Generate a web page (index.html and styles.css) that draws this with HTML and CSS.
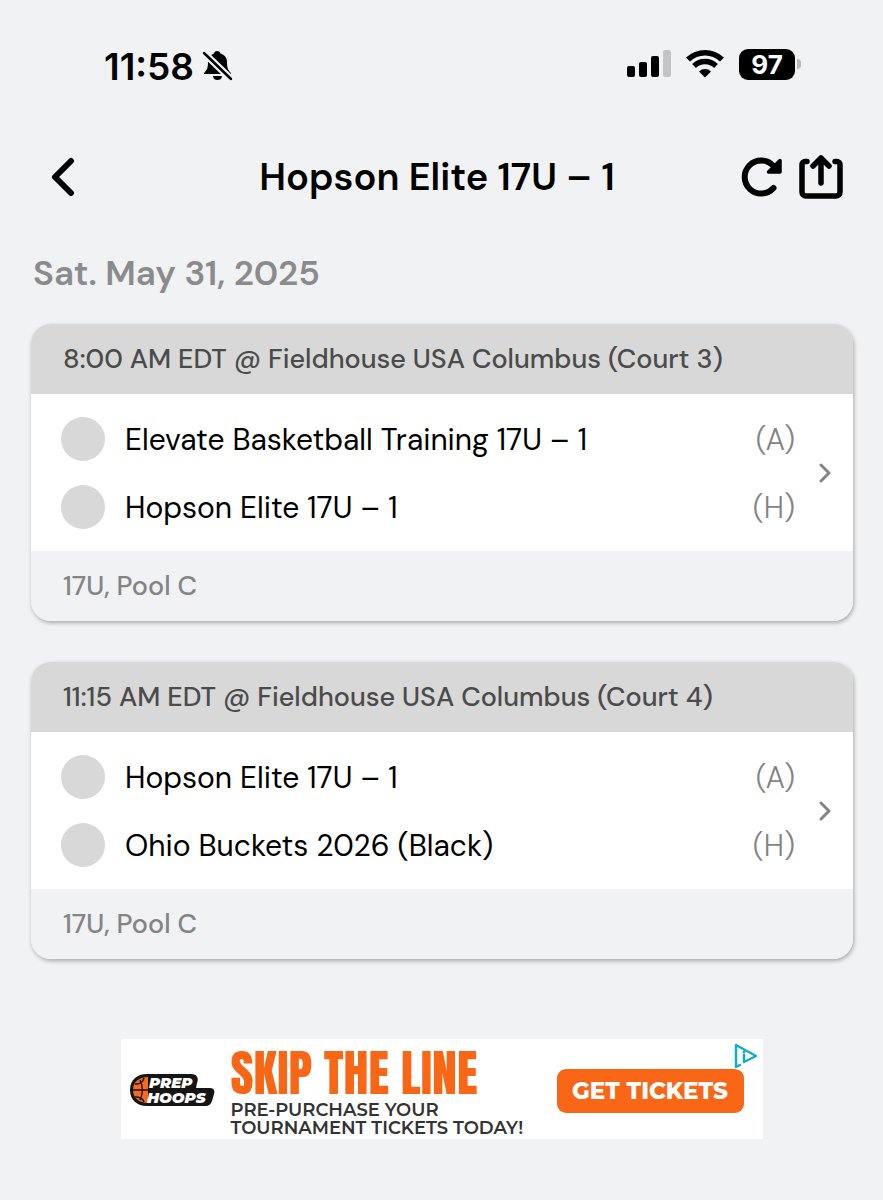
FILE: index.html
```
<!DOCTYPE html>
<html lang="en">
  <head>
    <meta charset="UTF-8" />
    <meta name="viewport" content="width=device-width, initial-scale=1.0" />
    <title>Hopson Elite 17U – 1</title>
    <link rel="stylesheet" href="styles.css">
  </head>
  <body>
    <div class="status">
      <div class="status__group">
        <span class="status__time">11:58</span>
        <svg width="32" height="34" viewBox="0 0 32 34" aria-hidden="true">
          <path d="M16 2c2 0 3 1 3.500 2.500C24 6 26 9 26 13c0 6 1 8 4 11v1H3v-1c3-3 4-5 4-11 0-4 2-7 6-8.500C13.500 3 14 2 16 2zM12 27h9c-.5 3-2 4-4.500 4S12.500 30 12 27z" />
          <path d="M3 4l27 26" stroke="#f1f2f4" stroke-width="7" />
          <path d="M3 4l27 26" stroke="#000" stroke-width="2.500" stroke-linecap="round" />
        </svg>
      </div>
      <div class="status__group status__group--right">
        <svg width="44" height="30" viewBox="0 0 44 30" aria-hidden="true">
          <rect x="0" y="17" width="8" height="11" rx="2" />
          <rect x="12" y="13" width="8" height="15" rx="2" />
          <rect x="24" y="7" width="8" height="21" rx="2" />
          <rect x="36" y="1" width="8" height="27" rx="2" fill="#c3c4c6" />
        </svg>
        <svg width="38" height="30" viewBox="0 0 38 30" aria-hidden="true">
          <path d="M2 10.500a24.500 24.500 0 0 1 34 0M8 17a16 16 0 0 1 22 0" fill="none" stroke="#000" stroke-width="5.500" />
          <path d="M19 28.500l-6-6a8.500 8.500 0 0 1 12 0z" />
        </svg>
        <span class="battery">97</span>
      </div>
    </div>

    <header class="topbar">
      <button class="icon-btn" type="button" aria-label="Back">
        <svg width="24" height="40" viewBox="0 0 24 40">
          <path d="M20 4L4 20l16 16" fill="none" stroke="#000" stroke-width="6" stroke-linecap="round" stroke-linejoin="round" />
        </svg>
      </button>
      <h1 class="topbar__title">Hopson Elite 17U – 1</h1>
      <div class="topbar__actions">
        <button class="icon-btn" type="button" aria-label="Refresh">
          <svg width="42" height="46" viewBox="0 0 42 46">
            <path d="M32 11.500A16.500 16.500 0 1 0 32.500 34" fill="none" stroke="#000" stroke-width="6" stroke-linecap="round" />
            <path d="M39 6.500v11.500H27.500z" stroke="#000" stroke-width="3.500" stroke-linejoin="round" />
          </svg>
        </button>
        <button class="icon-btn" type="button" aria-label="Share">
          <svg width="44" height="46" viewBox="0 0 44 46">
            <path d="M8 7.500H6a3 3 0 0 0-3 3V38a4 4 0 0 0 4 4h30a4 4 0 0 0 4-4V10.500a3 3 0 0 0-3-3h-2M22 29V5M14 12l8-8 8 8" fill="none" stroke="#000" stroke-width="5.500" stroke-linecap="round" stroke-linejoin="round" />
          </svg>
        </button>
      </div>
    </header>

    <main class="schedule">
      <h2 class="schedule__date">Sat. May 31, 2025</h2>

      <article class="game">
        <h3 class="game__head">8:00 AM EDT @ Fieldhouse USA Columbus (Court 3)</h3>
        <a class="game__body" href="#game-1">
          <div class="game__teams">
            <div class="team"><span class="team__logo"></span><span class="team__name">Elevate Basketball Training 17U – 1</span><span class="team__side">(A)</span></div>
            <div class="team"><span class="team__logo"></span><span class="team__name">Hopson Elite 17U – 1</span><span class="team__side">(H)</span></div>
          </div>
          <svg width="12" height="20" viewBox="0 0 12 20" aria-hidden="true">
            <path d="M2 2l8 8-8 8" fill="none" stroke="#848484" stroke-width="3" stroke-linecap="round" stroke-linejoin="round" />
          </svg>
        </a>
        <p class="game__foot">17U, Pool C</p>
      </article>

      <article class="game">
        <h3 class="game__head">11:15 AM EDT @ Fieldhouse USA Columbus (Court 4)</h3>
        <a class="game__body" href="#game-2">
          <div class="game__teams">
            <div class="team"><span class="team__logo"></span><span class="team__name">Hopson Elite 17U – 1</span><span class="team__side">(A)</span></div>
            <div class="team"><span class="team__logo"></span><span class="team__name">Ohio Buckets 2026 (Black)</span><span class="team__side">(H)</span></div>
          </div>
          <svg width="12" height="20" viewBox="0 0 12 20" aria-hidden="true">
            <path d="M2 2l8 8-8 8" fill="none" stroke="#848484" stroke-width="3" stroke-linecap="round" stroke-linejoin="round" />
          </svg>
        </a>
        <p class="game__foot">17U, Pool C</p>
      </article>
    </main>

    <aside class="ad">
      <svg class="ad__logo" width="86" height="36" viewBox="0 0 86 36" role="img" aria-label="Prep Hoops">
        <path d="M18 1h44c6 0 8 4 6 9l-1 5h14c4 0 5 3 4 6l-2 7c-1 3-3 5-7 5H18C8 33 1 27 1 17S8 1 18 1z" fill="#151515" />
        <path d="M19 4v26C10 30 4 25 4 17S10 4 19 4z" fill="#f56a1d" />
        <path d="M4 17h15M6 11c6 0 8-2 9-6M6 24c6 0 8 2 9 5M11 7c3 6 3 14 0 20" fill="none" stroke="#151515" stroke-width="1.500" />
        <text class="ad__logo-text" x="20" y="15">PREP</text>
        <text class="ad__logo-text" x="18" y="30">HOOPS</text>
      </svg>
      <div class="ad__copy">
        <strong class="ad__title">SKIP THE LINE</strong>
        <span>PRE-PURCHASE YOUR</span>
        <span>TOURNAMENT TICKETS TODAY!</span>
      </div>
      <button class="ad__cta" type="button">GET TICKETS</button>
      <a class="ad__choices" href="#adchoices" aria-label="Ad choices">
        <svg width="28" height="28" viewBox="0 0 28 28">
          <path d="M8 23l-4 2V3l20 11-12 6v-7" fill="none" stroke="#13adc7" stroke-width="2.500" stroke-linejoin="round" stroke-linecap="round" />
          <circle cx="12" cy="10" r="1.500" fill="#13adc7" />
        </svg>
      </a>
    </aside>
  </body>
</html>
```

FILE: styles.css
```
:root {
  --background: #f1f2f4;
  --gray: #d8d8d8;
  --muted: #848484;
  --orange: #f96716;
}
*,
*::before,
*::after {
  box-sizing: border-box;
}
body {
  margin: 0;
  color: #000;
  background: var(--background);
  font-family: "DM Sans", Inter, sans-serif;
}
h1,
h2,
h3,
p {
  margin: 0;
}
svg {
  display: block;
  flex: none;
}

/* Status bar */
.status {
  display: flex;
  justify-content: space-between;
  align-items: center;
  height: 132px;
  padding: 0 88px 0 104px;
}
.status__group {
  display: flex;
  align-items: center;
  gap: 7px;
}
.status__group--right {
  gap: 15px;
  padding-bottom: 4px;
}
.status__time {
  font-family: Inter, sans-serif;
  font-size: 37px;
  font-weight: 600;
}
.battery {
  position: relative;
  width: 56px;
  border-radius: 9px;
  color: #fff;
  background: #000;
  font-family: Inter, sans-serif;
  font-size: 26px;
  font-weight: 700;
  line-height: 31px;
  text-align: center;
}
.battery::after {
  content: "";
  position: absolute;
  top: 10px;
  right: -6px;
  width: 4px;
  height: 10px;
  border-radius: 0 5px 5px 0;
  background: #b9babc;
}

/* Navigation */
.topbar {
  display: grid;
  grid-template-columns: 110px 1fr 110px;
  align-items: center;
  height: 90px;
  padding: 0 40px 0 31px;
}
.topbar > .icon-btn {
  padding-left: 20px;
}
.topbar__title {
  font-size: 38px;
  font-weight: 600;
  text-align: center;
}
.topbar__actions {
  display: flex;
  justify-content: flex-end;
  gap: 16px;
}
.icon-btn {
  padding: 0;
  border: 0;
  background: none;
  cursor: pointer;
}

/* Schedule */
.schedule {
  padding: 24px 30px 0 31px;
}
.schedule__date {
  margin-bottom: 24px;
  padding-left: 2px;
  color: #8b8b8d;
  font-size: 35px;
  font-weight: 600;
  line-height: 54px;
}
.game {
  margin-bottom: 41px;
  border-radius: 20px;
  overflow: hidden;
  box-shadow: 1px 2px 4px rgba(0, 0, 0, 0.3);
}
.game__head,
.game__foot {
  padding: 0 32px;
  font-size: 27px;
  font-weight: 500;
  line-height: 70px;
}
.game__head {
  color: #4b4b4b;
  background: var(--gray);
}
.game__foot {
  color: var(--muted);
  background: var(--background);
}
.game__body {
  display: flex;
  align-items: center;
  gap: 24px;
  padding: 11px 22px 10px 30px;
  color: inherit;
  background: #fff;
  text-decoration: none;
}
.game__teams {
  flex: 1;
}
.team {
  display: flex;
  align-items: center;
  height: 68px;
  font-size: 30px;
}
.team__logo {
  width: 44px;
  height: 44px;
  margin-right: 20px;
  border-radius: 50%;
  background: var(--gray);
}
.team__name {
  flex: 1;
}
.team__side {
  color: var(--muted);
  font-weight: 300;
}

/* Ad */
.ad {
  position: relative;
  display: flex;
  align-items: center;
  max-width: 642px;
  height: 100px;
  margin: 80px auto 0;
  padding: 4px 19px 0 8px;
  background: #fff;
}
.ad__logo-text {
  fill: #fff;
  font: italic 900 15px Montserrat, Inter, sans-serif;
}
.ad__copy {
  display: flex;
  flex: 1;
  flex-direction: column;
  margin-left: 16px;
  color: #333;
  font-family: Montserrat, "DM Sans", sans-serif;
  font-size: 18px;
  font-weight: 600;
  line-height: 18px;
  white-space: nowrap;
}
.ad__title {
  color: var(--orange);
  font-family: Anton, Oswald, "Liberation Sans Narrow", sans-serif;
  font-size: 50px;
  font-weight: 400;
  line-height: 56px;
}
.ad__cta {
  width: 187px;
  height: 44px;
  padding: 0;
  border: 0;
  border-radius: 9px;
  color: #fff;
  background: var(--orange);
  font: 800 23px Montserrat, Inter, sans-serif;
}
.ad__choices {
  position: absolute;
  top: 3px;
  right: 3px;
}
```
